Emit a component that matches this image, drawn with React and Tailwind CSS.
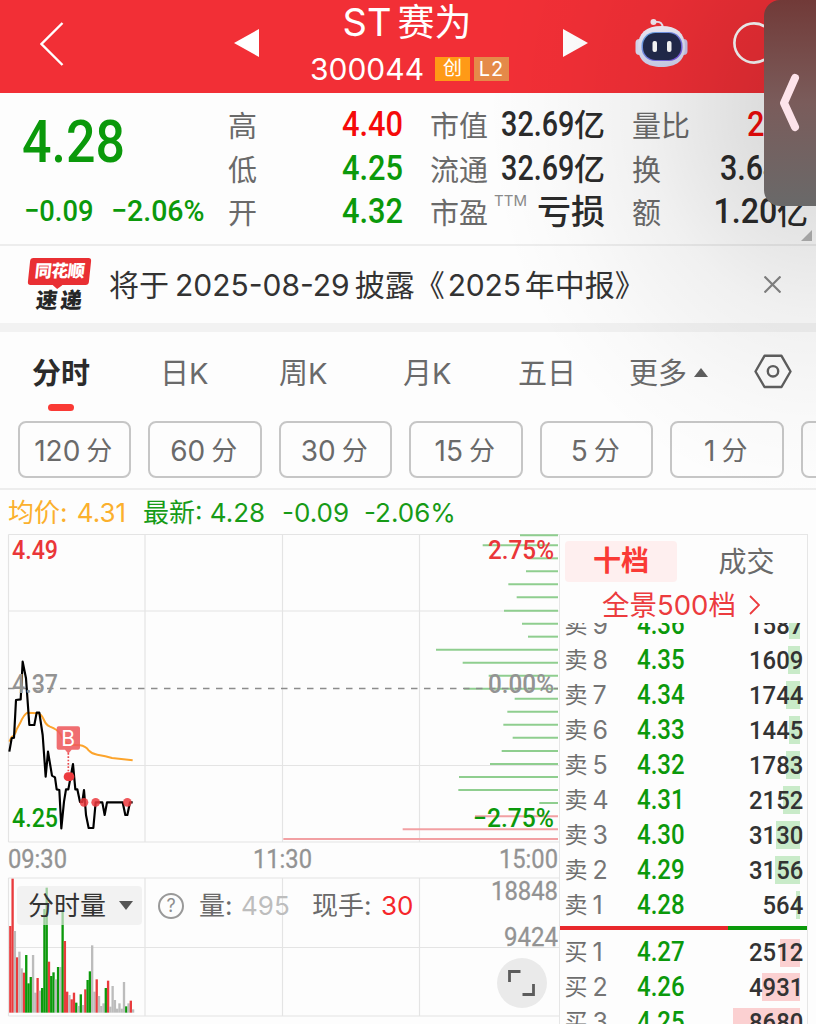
import React from "react";

const DIN = "font-['Roboto','Noto_Sans_CJK_SC',sans-serif]";

const GREEN = "#0b990b";
const RED = "#e93b3d";
const GREY = "#bcbcbc";

const pricePoints =
  "28,680 35,640 42,638 48,525 62,523 68,410 78,460 88,600 103,600 110,563 118,563 128,630 137,755 144,680 156,752 165,757 170,793 178,795 184,910 192,830 198,793 205,793 212,755 219,717 226,793 232,793 240,831 247,831 252,795 258,870 266,909 280,909 287,832 307,832 314,870 321,832 368,832 376,870 382,870 390,832 398,832";

const averagePath =
  "M28 650 L35 636 Q45 632 50 613 L60 595 Q72 568 82 563 L112 565 Q124 566 132 585 Q138 600 150 605 Q172 613 182 628 Q192 655 210 659 L240 661 Q256 663 266 676 Q276 687 292 689 Q318 693 336 699 L398 706";

const depthBars = [
  [360, 31], [248, 61], [385, 100], [378, 139], [325, 178], [350, 217], [312, 257], [366, 296],
  [384, 335], [108, 374], [188, 413], [266, 452], [192, 491], [344, 521], [322, 560], [310, 599],
  [338, 638], [305, 678], [270, 717], [177, 756], [175, 795], [418, 834],
  [225, 874, 1], [8, 913, 1], [-350, 942, 1],
];

const volumes = [
  [258, RED], [116, RED], [273, GREY], [352, RED], [335, GREY], [385, GREY], [398, RED], [345, GREEN],
  [430, GREEN], [411, GREEN], [345, GREY], [458, GREY], [414, RED], [452, GREY], [444, GREEN], [207, GREEN],
  [143, GREEN], [365, RED], [408, GREEN], [397, GREEN], [418, GREY], [381, GREEN], [381, GREY], [215, GREEN],
  [303, RED], [455, RED], [465, GREY], [478, RED], [458, RED], [488, GREEN], [498, GREY], [463, GREEN],
  [495, GREY], [448, RED], [420, GREEN], [394, GREEN], [316, GREY], [455, GREY], [418, RED], [468, GREY],
  [498, GREY], [490, GREY], [444, GREEN], [422, RED], [500, GREY], [438, GREY], [480, GREY], [506, GREY],
  [490, GREY], [506, GREY], [426, GREY], [499, GREEN], [490, GREY], [482, RED], [508, GREY],
];

const asks = [
  ["9", "4.36", "1587", 11],
  ["8", "4.35", "1609", 12.3],
  ["7", "4.34", "1744", 13.7],
  ["6", "4.33", "1445", 11],
  ["5", "4.32", "1783", 13.7],
  ["4", "4.31", "2152", 16.7],
  ["3", "4.30", "3130", 24],
  ["2", "4.29", "3156", 24.7],
  ["1", "4.28", "564", 4.3],
];
const bids = [
  ["1", "4.27", "2512", 19.7],
  ["2", "4.26", "4931", 37.7],
  ["3", "4.25", "8680", 66.7],
];

function Robot() {
  return (
    <svg className="ml-[47px] mt-[17px] h-[52px] w-[53px]" viewBox="0 0 53 52">
      <defs>
        <linearGradient id="shell" x1="0" y1="0" x2="0" y2="1">
          <stop offset="0" stopColor="#f4f1fb" />
          <stop offset="1" stopColor="#cfd3f0" />
        </linearGradient>
        <linearGradient id="rim" x1="0" y1="0" x2="1" y2="1">
          <stop offset="0" stopColor="#6fb4ea" />
          <stop offset="1" stopColor="#7a4be0" />
        </linearGradient>
      </defs>
      <path d="M20 5 Q28 4 27.500 11" fill="none" stroke="#ece8f5" strokeWidth="2" />
      <circle cx="18.500" cy="5" r="3" fill="#f5eaf2" />
      <rect x="0.500" y="22" width="8" height="16" rx="4" fill="#dcdcf3" />
      <rect x="44.500" y="22" width="8" height="16" rx="4" fill="#c9c6ea" />
      <path d="M26.500 9 C42 9 50 16 50 30 C50 44 41 50 26.500 50 C12 50 3 44 3 30 C3 16 11 9 26.500 9 Z" fill="url(#shell)" />
      <rect x="6.500" y="15" width="41" height="29" rx="13.500" fill="url(#rim)" />
      <rect x="8" y="16" width="38" height="27" rx="12.500" fill="#222a4c" />
      <rect x="17.500" y="24" width="4.500" height="11" rx="2" fill="#fff" />
      <rect x="32" y="24" width="4.500" height="11" rx="2" fill="#fff" />
    </svg>
  );
}

function Header() {
  return (
    <header className="flex h-[93px] shrink-0 items-start bg-[#f22f36] pl-10 text-white">
      <svg className="mt-[22px] h-11 w-6" viewBox="0 0 24 44" fill="none" stroke="#fff" strokeWidth="2.400">
        <path d="M22.500 1 L1.500 22 L22.500 43" />
      </svg>
      <svg className="ml-[170px] mt-[29px] h-7 w-[25px]" viewBox="0 0 25 28">
        <path d="M25 0 V28 L0 14 Z" fill="#fff" />
      </svg>
      <div className="flex w-[304px] flex-col items-center">
        <div className="flex h-[48px] items-baseline whitespace-nowrap pr-[8px] text-[36px] leading-[44px]">
          <span className="text-[38px]">ST</span>
          <span className="ml-[6px] text-[37px]">赛为</span>
        </div>
        <div className="flex h-10 items-center pr-[3px] pt-[2px]">
          <span className="text-[30px] leading-10">300044</span>
          <span className="ml-[11px] flex h-6 w-[35px] items-center justify-center bg-[#ff9a16] text-[19px] leading-6">创</span>
          <span className="ml-1 flex h-6 w-[35px] items-center justify-center bg-[#e58a49] text-[20px] leading-6 tracking-[1px]">L2</span>
        </div>
      </div>
      <svg className="mt-[29px] h-7 w-[25px]" viewBox="0 0 25 28">
        <path d="M0 0 V28 L25 14 Z" fill="#fff" />
      </svg>
      <Robot />
      <svg className="ml-[45px] mt-[22px] h-[42px] w-[42px]" viewBox="0 0 42 42">
        <circle cx="21" cy="21" r="19.600" fill="none" stroke="#fff" strokeWidth="2.600" />
      </svg>
    </header>
  );
}

function Quote() {
  const label = "text-[29px] leading-[43.5px] text-[#6a6a6a]";
  const value = "text-[35px] font-medium leading-[43.5px] " + DIN;
  return (
    <section className="relative flex h-[153px] shrink-0 border-b-2 border-[#ededed] pt-[10px]">
      <div className={"w-[228px] shrink-0 text-[#0b990b] " + DIN}>
        <div className="ml-[22px] mt-[8px] h-[60px] origin-left scale-x-[0.88] text-[59px] font-medium leading-[62px]">4.28</div>
        <div className="mt-[20px] flex text-[30px] leading-[39px]">
          <span className="ml-[24px] w-[87px] origin-left scale-x-[0.91] whitespace-nowrap font-medium">−0.09</span>
          <span className="w-[100px] origin-left scale-x-[0.95] whitespace-nowrap font-medium">−2.06%</span>
        </div>
      </div>
      <div className={"w-[60px] shrink-0 pt-[2px] " + label}>
        <div>高</div>
        <div>低</div>
        <div>开</div>
      </div>
      <div className={"w-[115px] shrink-0 origin-right scale-x-[0.88] text-right " + value}>
        <div className="text-[#f50a0a]">4.40</div>
        <div className="text-[#0b990b]">4.25</div>
        <div className="text-[#0b990b]">4.32</div>
      </div>
      <div className={"ml-[27px] w-[70px] shrink-0 whitespace-nowrap pt-[2px] " + label}>
        <div>市值</div>
        <div>流通</div>
        <div className="flex">
          市盈<span className="ml-[6px] text-[15px] leading-[17px] text-[#8a8a8a]">TTM</span>
        </div>
      </div>
      <div className="w-[105px] shrink-0 whitespace-nowrap text-[#2b2b2b]">
        {["32.69", "32.69"].map((n, i) => (
          <div key={i} className="flex h-[43.5px] justify-end">
            <span className={"origin-right scale-x-[0.82] " + value}>{n}</span>
            <span className="text-[31px] font-medium leading-[43.5px]">亿</span>
          </div>
        ))}
        <div className="text-right text-[34px] font-medium leading-[43.5px]">亏损</div>
      </div>
      <div className={"ml-[27px] w-[70px] shrink-0 whitespace-nowrap pt-[2px] " + label}>
        <div>量比</div>
        <div>换</div>
        <div>额</div>
      </div>
      <div className="w-[106px] shrink-0 whitespace-nowrap text-[#2b2b2b]">
        <div className={"ml-[45px] h-[43.5px] origin-left scale-x-[0.88] text-[#f50a0a] " + value}>2</div>
        <div className={"ml-[18px] h-[43.5px] origin-left scale-x-[0.87] " + value}>3.64</div>
        <div className="flex h-[43.5px] justify-end">
          <span className={"origin-right scale-x-[0.92] " + value}>1.20</span>
          <span className="text-[31px] font-medium leading-[45px]">亿</span>
        </div>
      </div>
      <svg className="absolute bottom-[3px] right-[4px] h-[11px] w-[11px]" viewBox="0 0 11 11">
        <path d="M11 0 V11 H0 Z" fill="#b4b4b4" />
      </svg>
    </section>
  );
}

function Notice() {
  return (
    <section className="flex h-[86px] shrink-0 items-start border-b-[9px] border-[#f2f2f2] pl-[27px]">
      <div className="flex w-16 shrink-0 flex-col items-center pt-3">
        <div className="relative flex h-[27px] w-[61px] -skew-x-6 items-center justify-center rounded-[3px] bg-[#e92f33] text-[17px] font-black leading-[27px] tracking-[-0.5px] text-white">
          同花顺
          <svg className="absolute -bottom-1 left-[25px] h-1 w-[10px]" viewBox="0 0 10 4">
            <path d="M0 0 H10 L5 4 Z" fill="#e92f33" />
          </svg>
        </div>
        <div className="mt-1 flex -skew-x-6 gap-[3px] text-[21.5px] font-black leading-[23px] text-[#262626]">
          <span>速</span>
          <span>递</span>
        </div>
      </div>
      <div className="ml-[18px] flex w-[640px] items-center whitespace-nowrap text-[30px] leading-[78px] text-[#333]">
        <span>将于</span>
        <span className="ml-[6px]">2025-08-29</span>
        <span className="ml-[5px]">披露《</span>
        <span className="ml-[3px] tracking-[-0.2px]">2025</span>
        <span className="ml-[4px]">年中报》</span>
      </div>
      <svg className="ml-[15px] mt-[30px] h-[17px] w-[17px]" viewBox="0 0 17 17" fill="none" stroke="#858585" strokeWidth="2.200">
        <path d="M0.500 0.500 L16.500 16.500 M16.500 0.500 L0.500 16.500" />
      </svg>
    </section>
  );
}

function Tabs() {
  return (
    <nav className="flex h-[89px] shrink-0 items-start whitespace-nowrap pt-[18px] text-[29px] leading-[47px] text-[#6a6a6a]">
      <div className="ml-[32px] flex w-[128px] flex-col items-start font-bold text-[#2b2b2b]">
        分时
        <span className="ml-4 mt-[7px] h-[7px] w-[26px] rounded-full bg-[#fa3a35]" />
      </div>
      <div className="w-[119px]">日K</div>
      <div className="w-[124px]">周K</div>
      <div className="w-[115px]">月K</div>
      <div className="w-[111px]">五日</div>
      <div className="flex w-[125px] items-center">
        更多
        <svg className="mb-[3px] ml-[7px] h-[9px] w-[14px]" viewBox="0 0 14 9">
          <path d="M7 0 L14 9 H0 Z" fill="#5f5f5f" />
        </svg>
      </div>
      <svg className="mt-[4px] h-[35px] w-[38px]" viewBox="0 0 38 35" fill="none" stroke="#5f5f5f" strokeWidth="2.400">
        <path d="M10.500 1.800 H27.500 L36.500 17.500 L27.500 33 H10.500 L1.500 17.500 Z" strokeLinejoin="round" />
        <circle cx="19" cy="17.300" r="5.200" />
      </svg>
    </nav>
  );
}

function Periods() {
  return (
    <div className="flex h-[69px] shrink-0 gap-[17px] overflow-hidden border-b-2 border-[#ededed] pl-[17.5px]">
      {["120", "60", "30", "15", "5", "1"].map((n) => (
        <div
          key={n}
          className="flex h-[57px] w-[113.5px] shrink-0 items-center justify-center rounded-lg border-2 border-[#c6c6c6] pr-[2px] pt-[2px] text-[#6a6a6a]"
        >
          <span className="text-[28px]">{n}</span>
          <span className="ml-[6px] text-[26px]">分</span>
        </div>
      ))}
      <div className="h-[57px] w-[113.5px] shrink-0 rounded-lg border-2 border-[#c6c6c6]" />
    </div>
  );
}

function Legend() {
  return (
    <div className="flex h-[44px] shrink-0 items-center whitespace-nowrap pl-2 pt-[2px] text-[26px] leading-[44px] text-[#179b17]">
      <span className="w-[135px] text-[#fbb02d]">
        均价: <span className="ml-[2px]">4.31</span>
      </span>
      <span className="w-[139px]">最新: 4.28</span>
      <span className="w-[82px]">-0.09</span>
      <span>-2.06%</span>
    </div>
  );
}

function Charts() {
  const grid = "#e4e4e4";
  return (
    <div className="relative w-[559px] shrink-0">
      <svg className="block h-[490px] w-[559px]" viewBox="0 0 559 490">
        <g stroke={grid} strokeWidth="1.200" fill="none">
          <path d="M8.500 0.500 H559 M8.500 77 H559 M8.500 231.500 H559 M8.500 308 H559" />
          <path d="M8.500 0.500 V308 M145 0.500 V308 M282.500 0.500 V308 M419.500 0.500 V308" />
          <path d="M8.500 344 H559 M8.500 413.500 H559 M8.500 482 H559" />
          <path d="M8.500 344 V482 M145 344 V482 M282.500 344 V482 M419.500 344 V482" />
        </g>
        <g transform="translate(400 -9) scale(0.33333)">
          {depthBars.map(([x, y, red]) => (
            <path key={y} d={`M${x} ${y} H474`} stroke={red ? "#f2a0a3" : "#8fce8f"} strokeWidth="6" />
          ))}
        </g>
        <path d="M8 154.500 H558" stroke="#8c8c8c" strokeWidth="1.400" strokeDasharray="6.500 6.500" />
        <g transform="translate(0 -9) scale(0.33333)" fill="none" strokeLinejoin="round">
          <path d={averagePath} stroke="#fca42c" strokeWidth="6" />
          <polyline points={pricePoints} stroke="#000" strokeWidth="6.500" />
          <path d="M205 684 V740" stroke="#e84a4e" strokeWidth="5" strokeDasharray="5 5" />
          <g fill="#ec3a3e" fillOpacity="0.850">
            <rect x="191" y="742" width="32" height="26" rx="13" fillOpacity="1" />
            <circle cx="252" cy="832" r="13" />
            <circle cx="287" cy="832" r="13" />
            <circle cx="382" cy="832" r="13" />
          </g>
          <path d="M176 604 H234 Q240 604 240 610 V668 Q240 674 234 674 H215 L205 686 L195 674 H176 Q170 674 170 668 V610 Q170 604 176 604 Z" fill="#ee5a5d" fillOpacity="0.880" />
        </g>
        <text x="68" y="211.500" textAnchor="middle" fontSize="21" fill="#fff" className="font-['Inter',sans-serif]">B</text>
        <g transform="translate(0 306) scale(0.33333)">
          {volumes.map(([top, color], i) => (
            <rect key={i} x={27.5 + i * 6.82} y={top} width="7" height={518 - top} fill={color} />
          ))}
        </g>
        <g className="font-['Roboto',sans-serif]" fontSize="26" fontWeight="500">
          <text x="12" y="25" fill="#ea3639" textLength="46" lengthAdjust="spacingAndGlyphs">4.49</text>
          <text x="12" y="159" fill="#939393" textLength="46" lengthAdjust="spacingAndGlyphs">4.37</text>
          <text x="12" y="293" fill="#0b990b" textLength="46" lengthAdjust="spacingAndGlyphs">4.25</text>
          <text x="488" y="25" fill="#ea3639" textLength="66" lengthAdjust="spacingAndGlyphs">2.75%</text>
          <text x="488" y="159" fill="#939393" textLength="66" lengthAdjust="spacingAndGlyphs">0.00%</text>
          <text x="473" y="293" fill="#0b990b" textLength="81" lengthAdjust="spacingAndGlyphs">−2.75%</text>
        </g>
        <g className="font-['Roboto',sans-serif]" fontSize="25.500" fill="#939393" stroke="#939393" strokeWidth="0.300">
          <text x="8" y="334" textLength="59" lengthAdjust="spacingAndGlyphs">09:30</text>
          <text x="253" y="334" textLength="59" lengthAdjust="spacingAndGlyphs">11:30</text>
          <text x="499" y="334" textLength="59" lengthAdjust="spacingAndGlyphs">15:00</text>
          <text x="491" y="366" textLength="67" lengthAdjust="spacingAndGlyphs">18848</text>
          <text x="504" y="411.500" textLength="54" lengthAdjust="spacingAndGlyphs">9424</text>
        </g>
      </svg>
      <div className="absolute left-[17px] top-[352px] flex h-[39px] items-center whitespace-nowrap text-[26px] leading-[41px] text-[#6a6a6a]">
        <div className="flex h-[39px] w-[125px] items-center rounded bg-[#ededed]/65 pl-[11px] text-[#333]">
          分时量
          <svg className="ml-[13px] h-[9px] w-[14px]" viewBox="0 0 14 9">
            <path d="M0 0 H14 L7 9 Z" fill="#555" />
          </svg>
        </div>
        <span className="ml-4 flex h-[26px] w-[26px] items-center justify-center rounded-full border-2 border-[#999] text-[18px] leading-none text-[#8f8f8f]">?</span>
        <span className="ml-[15px] w-[42px]">量:</span>
        <span className="w-[71px] text-[#bdbdbd]">495</span>
        <span className="w-[69px]">现手:</span>
        <span className="text-[#f6262a]">30</span>
      </div>
      <div className="absolute left-[496.5px] top-[424px] flex h-[50px] w-[50px] items-center justify-center rounded-full bg-[#eaeaea]">
        <svg className="h-[26px] w-[27px]" viewBox="0 0 27 26" fill="none" stroke="#5c5c5c" strokeWidth="2.800">
          <path d="M1.500 12 V1.500 H12.500 M25.500 14 V24.500 H14.500" />
        </svg>
      </div>
    </div>
  );
}

function BookRow({ side, level, price, size, bar }) {
  return (
    <div className="relative flex h-[34.9px] shrink-0 items-center whitespace-nowrap pl-[4.5px]">
      <span
        className={"absolute right-[7px] top-[3.5px] h-7 " + (side === "卖" ? "bg-[#c9ebc9]" : "bg-[#fbd0d1]")}
        style={{ width: bar }}
      />
      <span className="w-[28px] text-[23px] leading-[36px] text-[#6e6e6e]">{side}</span>
      <span className="w-[44px] text-[25px] leading-[36px] text-[#757575]">{level}</span>
      <span className={"w-[80px] origin-left scale-x-[0.89] text-[27px] font-medium leading-[36px] text-[#0b990b] " + DIN}>{price}</span>
      <span className={"relative ml-auto mr-[3.5px] origin-right scale-x-[0.9] text-[26.5px] font-medium leading-[34px] text-[#333] " + DIN}>{size}</span>
    </div>
  );
}

function OrderBook() {
  return (
    <aside className="flex h-[490px] w-[249px] shrink-0 flex-col overflow-hidden border-x-[1.5px] border-t border-[#e6e6e6]">
      <div className="flex h-[48px] shrink-0 items-start pl-[5px] pt-[6px] text-[28px] leading-[41px]">
        <div className="h-[41px] w-[112px] rounded bg-[#feefef] text-center font-bold text-[#fa3a35]">十档</div>
        <div className="flex-1 pl-[9px] pt-px text-center text-[#6a6a6a]">成交</div>
      </div>
      <div className="flex h-[40px] shrink-0 items-center whitespace-nowrap pl-[42px] pt-[4px] text-[27.5px] leading-[44px] text-[#ec3b3e]">
        全景500档
        <svg className="ml-[13px] h-5 w-[11px]" viewBox="0 0 11 20" fill="none" stroke="#ec3b3e" strokeWidth="1.800">
          <path d="M1 1 L10 10 L1 19" />
        </svg>
      </div>
      <div className="flex h-[299px] shrink-0 flex-col justify-end overflow-hidden">
        {asks.map(([level, price, size, bar]) => (
          <BookRow key={level} side="卖" level={level} price={price} size={size} bar={bar} />
        ))}
      </div>
      <div className="mt-[3.5px] flex h-1 shrink-0">
        <span className="w-[168px] bg-[#e8282c]" />
        <span className="flex-1 bg-[#0b990b]" />
      </div>
      <div className="flex flex-col pt-[5.5px]">
        {bids.map(([level, price, size, bar]) => (
          <BookRow key={level} side="买" level={level} price={price} size={size} bar={bar} />
        ))}
      </div>
    </aside>
  );
}

export default function App() {
  return (
    <div className="relative flex h-[1024px] w-[816px] flex-col overflow-hidden bg-[#fdfdfd] font-['Inter','Noto_Sans_CJK_SC',sans-serif]">
      <Header />
      <Quote />
      <Notice />
      <Tabs />
      <Periods />
      <Legend />
      <div className="flex h-[490px] shrink-0">
        <Charts />
        <OrderBook />
      </div>
      <div className="pointer-events-none absolute right-0 top-0 h-[520px] w-[400px] bg-[radial-gradient(ellipse_330px_390px_at_400px_110px,rgba(0,0,0,0.16),rgba(0,0,0,0.11)_25%,rgba(0,0,0,0.05)_52%,rgba(0,0,0,0.016)_80%,transparent)]" />
      <div className="absolute right-0 top-0 flex h-[206px] w-[52px] items-center rounded-l-[16px] bg-linear-to-b from-[#713a38] via-[#7a5c5b] via-50% to-[#696969] pl-[15px]">
        <svg className="h-[60px] w-[22px]" viewBox="0 0 22 60" fill="none" stroke="#fde3ea" strokeWidth="8" strokeLinecap="round" strokeLinejoin="round">
          <path d="M16 5 L5 30 L16 54" />
        </svg>
      </div>
    </div>
  );
}
